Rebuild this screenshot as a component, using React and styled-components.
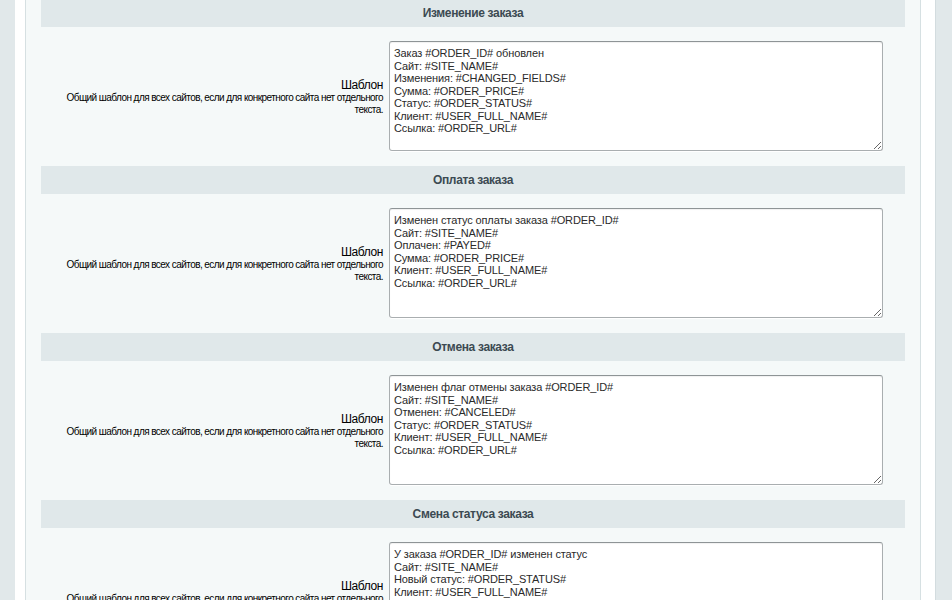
import React from 'react';
import styled, { createGlobalStyle } from 'styled-components';

const GlobalStyle = createGlobalStyle`
    html, body {
        margin: 0;
        padding: 0;
        background: #e1e8ea;
        font-family: "Liberation Sans", Arial, sans-serif;
        overflow: hidden;
    }
`;

const Page = styled.div`
    margin: -1px 16px 0 15px;
    padding: 0 14px 0 10px;
    background: #fff;
    border-right: 1px solid #d3dcdf;
    min-height: 620px;
`;

const Panel = styled.div`
    background: #f5f9f9;
    border-left: 1px solid #d6e0e2;
    border-right: 1px solid #d6e0e2;
    padding: 0 15px;
    min-height: 620px;
`;

const Heading = styled.div`
    height: 28px;
    line-height: 28px;
    background: #e0e8ea;
    color: #3c4a52;
    font-size: 12px;
    font-weight: bold;
    letter-spacing: -0.35px;
    text-align: center;
`;

const Row = styled.div`
    display: grid;
    grid-template-columns: 346px 1fr;
    align-items: center;
    padding: 14px 0 15px;
`;

const Label = styled.div`
    padding: 2px 4px 0 0;
    text-align: right;
    color: #000;
`;

const Title = styled.div`
    font-size: 12px;
    line-height: 14px;
    letter-spacing: -0.4px;
`;

const Hint = styled.div`
    font-size: 10px;
    line-height: 12px;
    letter-spacing: -0.56px;
`;

const Field = styled.div`
    padding-left: 2px;
`;

const Area = styled.textarea`
    display: block;
    box-sizing: border-box;
    width: 494px;
    height: 110px;
    margin: 0;
    padding: 5px 4px 4px;
    border: 1px solid #a9aeb0;
    border-top-color: #8e9496;
    border-radius: 3px;
    background: #fff;
    color: #2a2a2a;
    font-family: "Liberation Sans", Arial, sans-serif;
    font-size: 11px;
    line-height: 12.5px;
    letter-spacing: -0.12px;
    resize: both;
    outline: none;
    box-shadow: 0 1px 0 #fff, inset 0 1px 1px rgba(0, 0, 0, 0.06);
`;

const sections = [
    {
        title: 'Изменение заказа',
        text: 'Заказ #ORDER_ID# обновлен\nСайт: #SITE_NAME#\nИзменения: #CHANGED_FIELDS#\nСумма: #ORDER_PRICE#\nСтатус: #ORDER_STATUS#\nКлиент: #USER_FULL_NAME#\nСсылка: #ORDER_URL#',
    },
    {
        title: 'Оплата заказа',
        text: 'Изменен статус оплаты заказа #ORDER_ID#\nСайт: #SITE_NAME#\nОплачен: #PAYED#\nСумма: #ORDER_PRICE#\nКлиент: #USER_FULL_NAME#\nСсылка: #ORDER_URL#',
    },
    {
        title: 'Отмена заказа',
        text: 'Изменен флаг отмены заказа #ORDER_ID#\nСайт: #SITE_NAME#\nОтменен: #CANCELED#\nСтатус: #ORDER_STATUS#\nКлиент: #USER_FULL_NAME#\nСсылка: #ORDER_URL#',
    },
    {
        title: 'Смена статуса заказа',
        text: 'У заказа #ORDER_ID# изменен статус\nСайт: #SITE_NAME#\nНовый статус: #ORDER_STATUS#\nКлиент: #USER_FULL_NAME#\nСсылка: #ORDER_URL#',
    },
];

const App = () => (
    <>
        <GlobalStyle />
        <Page>
            <Panel>
                {sections.map((s) => (
                    <React.Fragment key={s.title}>
                        <Heading>{s.title}</Heading>
                        <Row>
                            <Label>
                                <Title>Шаблон</Title>
                                <Hint>Общий шаблон для всех сайтов, если для конкретного сайта нет отдельного текста.</Hint>
                            </Label>
                            <Field>
                                <Area defaultValue={s.text} spellCheck={false} />
                            </Field>
                        </Row>
                    </React.Fragment>
                ))}
            </Panel>
        </Page>
    </>
);

export default App;
